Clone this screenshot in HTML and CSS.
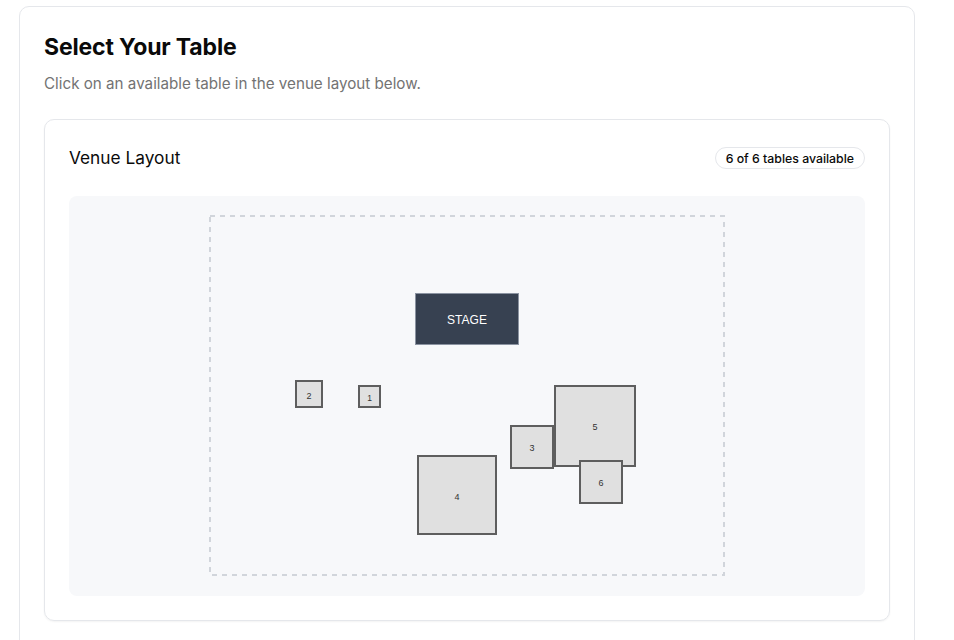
FILE: index.html
```html
<!DOCTYPE html>
<html lang="en">
<head>
<meta charset="utf-8">
<title>Select Your Table</title>
<link rel="stylesheet" href="styles.css">
</head>
<body>
<main class="card">
  <h1 class="title">Select Your Table</h1>
  <p class="subtitle">Click on an available table in the venue layout below.</p>
  <section class="venue">
    <div class="venue-head">
      <h2 class="venue-title">Venue Layout</h2>
      <span class="badge">6 of 6 tables available</span>
    </div>
    <div class="canvas">
      <svg class="map" width="796" height="400" viewBox="0 0 796 400" xmlns="http://www.w3.org/2000/svg">
        <rect class="bounds" x="141" y="20" width="514" height="359"/>
        <rect class="stage" x="346.5" y="97.5" width="103" height="51"/>
        <text class="stage-label" x="398" y="124">STAGE</text>
        <g class="tbl"><rect x="227" y="185" width="26" height="26"/><text x="240" y="199.5">2</text></g>
        <g class="tbl"><rect x="290" y="190" width="21" height="21"/><text class="sm" x="300.5" y="201.5">1</text></g>
        <g class="tbl"><rect x="349" y="260" width="78" height="78"/><text x="388" y="300.5">4</text></g>
        <g class="tbl"><rect x="442" y="230" width="42" height="42"/><text x="463" y="252">3</text></g>
        <g class="tbl"><rect x="486" y="190" width="80" height="80"/><text x="526" y="231">5</text></g>
        <g class="tbl"><rect x="511" y="265" width="42" height="42"/><text x="532" y="287">6</text></g>
      </svg>
    </div>
  </section>
</main>
</body>
</html>
```

FILE: styles.css
```css
* { box-sizing: border-box; }
html, body { margin: 0; background: #fff; }
body {
  padding: 6px 0 0 19px;
  font-family: Inter, "Noto Sans", "Liberation Sans", sans-serif;
  color: #0a0a0a;
}
.card {
  width: 896px;
  height: 700px;
  border: 1px solid #e5e7eb;
  border-radius: 10px;
  padding: 24px;
  background: #fff;
}
.title {
  margin: 0;
  font-size: 23px;
  line-height: 32px;
  font-weight: 700;
  letter-spacing: -0.15px;
}
.subtitle {
  margin: 9px 0 23px;
  font-size: 15.2px;
  line-height: 24px;
  color: #737373;
}
.venue {
  border: 1px solid #e5e7eb;
  border-radius: 10px;
  padding: 24px;
  box-shadow: 0 1px 2px rgba(0,0,0,0.05);
}
.venue-head {
  display: flex;
  align-items: center;
  justify-content: space-between;
  height: 28px;
  margin-bottom: 24px;
}
.venue-title {
  margin: 0;
  font-size: 17.3px;
  font-weight: 400;
  line-height: 28px;
}
.badge {
  display: inline-flex;
  align-items: center;
  height: 22px;
  padding: 0 10px;
  border: 1px solid #e5e7eb;
  border-radius: 999px;
  font-size: 12.3px;
  font-weight: 500;
  color: #0a0a0a;
}
.canvas {
  height: 400px;
  background: #f7f8fa;
  border-radius: 8px;
  overflow: hidden;
}
.map { display: block; }
.bounds {
  fill: none;
  stroke: #d1d5db;
  stroke-width: 2;
  stroke-dasharray: 5 5;
}
.stage { fill: #374151; stroke: #8b93a1; stroke-width: 1; }
.stage-label {
  fill: #fff;
  font-family: "Liberation Sans", Arial, sans-serif;
  font-size: 12px;
  text-anchor: middle;
  dominant-baseline: central;
}
.tbl rect { fill: #e0e0e0; stroke: #5e5e5e; stroke-width: 2; }
.tbl text {
  fill: #333;
  font-family: "Liberation Sans", Arial, sans-serif;
  font-size: 9px;
  text-anchor: middle;
  dominant-baseline: central;
}
.tbl text.sm { font-size: 8.5px; }
```
